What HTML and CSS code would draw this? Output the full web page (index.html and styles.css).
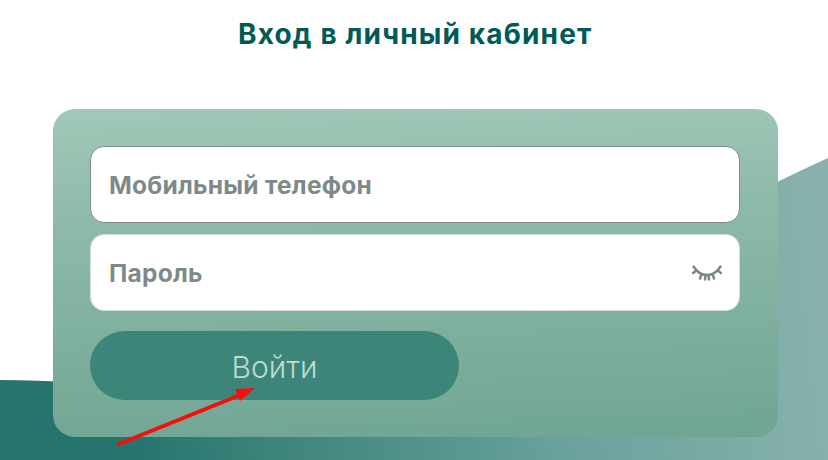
FILE: index.html
```html
<!DOCTYPE html>
<html lang="ru">
<head>
<meta charset="utf-8">
<title>Вход в личный кабинет</title>
<link rel="stylesheet" href="styles.css">
</head>
<body>
<svg class="wave" viewBox="0 0 828 460" width="828" height="460" aria-hidden="true">
  <defs>
    <linearGradient id="waveFill" gradientUnits="userSpaceOnUse" x1="130" y1="420" x2="828" y2="340">
      <stop offset="0" stop-color="#26756c"/>
      <stop offset="0.6" stop-color="#69a19c"/>
      <stop offset="1" stop-color="#88b2ab"/>
    </linearGradient>
  </defs>
  <path class="wave-shape" d="M0 380 C120 381 260 400 420 345 C560 298 700 216 828 158 V460 H0 Z" fill="url(#waveFill)"/>
</svg>
<main class="page">
  <h1 class="title">Вход в личный кабинет</h1>
  <form class="card">
    <div class="field field-active"><span class="label">Мобильный телефон</span></div>
    <div class="field"><span class="label">Пароль</span>
      <svg class="eye" viewBox="0 0 30 16" width="30" height="16" aria-hidden="true">
        <path d="M1.5 1.500C5.500 8 10 10 15 10S24.500 8 28.500 1.500M4.500 5.500L1 8M9.500 9L8 13.500M13.500 10L13 14.500M16.500 10L17 14.500M20.500 9L22 13.500M25.500 5.500L29 8"/>
      </svg>
    </div>
    <button class="submit" type="button"><span class="submit-text">Войти</span></button>
  </form>
</main>
<svg class="arrow" viewBox="0 0 828 460" width="828" height="460" aria-hidden="true">
  <path class="arrow-line" d="M119 444L245 393"/>
  <path class="arrow-head" d="M255 388L235 389L240 401Z"/>
</svg>
</body>
</html>
```
FILE: styles.css
```css
html, body { margin: 0; padding: 0; }
body {
  position: relative;
  width: 828px;
  height: 460px;
  overflow: hidden;
  background: #fff;
  font-family: "Inter", "Open Sans", sans-serif;
}
.wave { position: absolute; left: 0; top: 0; display: block; }
.arrow { position: absolute; left: 0; top: 0; display: block; pointer-events: none; }
.arrow-line { stroke: #f80d0d; stroke-width: 4; fill: none; stroke-linecap: round; }
.arrow-head { fill: #f80d0d; }
.page {
  position: relative;
  display: flex;
  flex-direction: column;
  align-items: flex-start;
}
.title {
  margin: 15px 0 0 238px;
  height: 38px;
  line-height: 38px;
  font-size: 28px;
  font-weight: 700;
  letter-spacing: 1.15px;
  white-space: nowrap;
  color: #005a55;
}
.card {
  box-sizing: border-box;
  width: 725px;
  height: 328px;
  margin: 56px 0 0 53px;
  padding: 37px 38px 37px 37px;
  border-radius: 22px;
  background: linear-gradient(178deg, #a1c8b8 0%, #8db9a8 35%, #70a593 100%);
  display: flex;
  flex-direction: column;
  gap: 11px;
}
.field {
  box-sizing: border-box;
  height: 77px;
  padding: 0 18px;
  display: flex;
  align-items: center;
  justify-content: space-between;
  background: #fff;
  border: 1px solid #d4dcd9;
  border-radius: 14px;
}
.field-active { border-color: #808a86; }
.label {
  font-size: 24.5px;
  font-weight: 700;
  letter-spacing: 0.25px;
  color: #7e8a8a;
}
.eye { fill: none; stroke: #78868a; stroke-width: 2.4; stroke-linecap: round; margin: 1px -1px 0 0; }
.submit {
  width: 369px;
  height: 69px;
  margin-top: 9px;
  border: 0;
  border-radius: 35px;
  background: #3d8578;
  color: #bcdcd0;
  font-family: "Inter", "Noto Sans", sans-serif;
  font-size: 30px;
  font-weight: 300;
  padding: 2px 0 0;
}
.submit-text { display: block; }
```
